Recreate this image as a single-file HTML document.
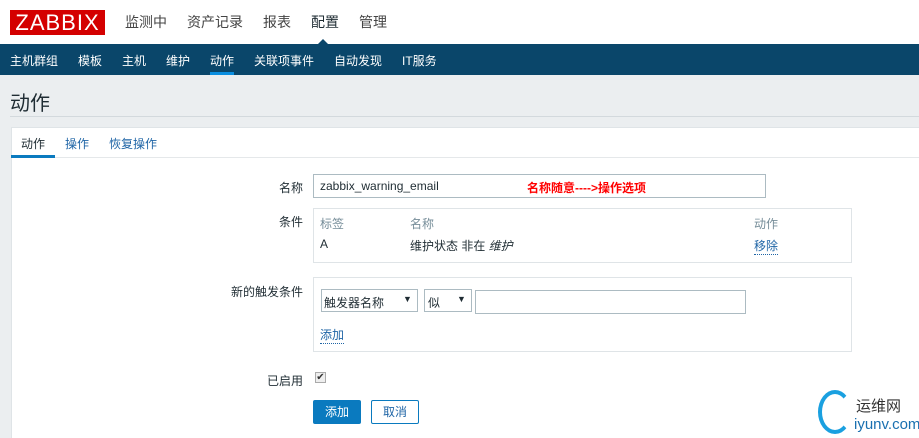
<!DOCTYPE html>
<html><head><meta charset="utf-8"><style>
*{margin:0;padding:0;box-sizing:border-box}
body{width:919px;height:438px;overflow:hidden;background:#ebeef0;font-family:"Liberation Sans","Noto Sans CJK SC",sans-serif;font-size:12px;color:#1f2c33;position:relative}
.a{position:absolute}
.hdr{left:0;top:0;width:919px;height:44px;background:#fff}
.logo{left:10px;top:10px;width:95px;height:25px;background:#d40000;color:#fff;font-size:22px;line-height:25px;text-align:center;letter-spacing:1px}
.top{top:12px;font-size:14px;color:#444}
.nav{left:0;top:44px;width:919px;height:31px;background:#0a466a}
.nav span{position:absolute;top:8px;color:#fff;font-size:12px}
.tab{top:135px;color:#1f65a6}
.lbl{right:616px;text-align:right;color:#1f2c33}
.box{border:1px solid #dfe4e7;background:#fff}
.inp{border:1px solid #acbbc2;background:#fff}
.lnk{color:#1f65a6;border-bottom:1px dotted #1f65a6}
</style></head><body>
<div class="a hdr"></div>
<div class="a logo">ZABBIX</div>
<div class="a top" style="left:125px">监测中</div>
<div class="a top" style="left:187px">资产记录</div>
<div class="a top" style="left:263px">报表</div>
<div class="a top" style="left:311px;color:#1f2c33">配置</div>
<div class="a top" style="left:359px">管理</div>
<div class="a nav">
<span style="left:10px">主机群组</span><span style="left:78px">模板</span><span style="left:122px">主机</span><span style="left:166px">维护</span><span style="left:210px">动作</span><span style="left:254px">关联项事件</span><span style="left:334px">自动发现</span><span style="left:402px">IT服务</span>
</div>
<div class="a" style="left:210px;top:72px;width:24px;height:3px;background:#0a8ee0"></div>
<div class="a" style="left:318px;top:39px;width:0;height:0;border-left:5px solid transparent;border-right:5px solid transparent;border-bottom:5px solid #0a466a"></div>
<div class="a" style="left:10px;top:87px;font-size:20px;color:#1f2c33">动作</div>
<div class="a" style="left:10px;top:116px;width:909px;height:1px;background:#d3d9dd"></div>
<div class="a" style="left:11px;top:127px;width:908px;height:311px;background:#fff;border:1px solid #dfe4e7;border-right:none;border-bottom:none"></div>
<div class="a" style="left:11px;top:157px;width:908px;height:1px;background:#e5e8ea"></div>
<div class="a tab" style="left:21px;color:#1f2c33">动作</div>
<div class="a tab" style="left:65px">操作</div>
<div class="a tab" style="left:109px">恢复操作</div>
<div class="a" style="left:11px;top:155px;width:44px;height:3px;background:#0a7abf"></div>
<div class="a lbl" style="top:179px">名称</div>
<div class="a inp" style="left:313px;top:174px;width:453px;height:24px"></div>
<div class="a" style="left:320px;top:179px;color:#1f2c33">zabbix_warning_email</div>
<div class="a" style="left:527px;top:179px;color:#f00;font-weight:bold">名称随意---->操作选项</div>
<div class="a lbl" style="top:213px">条件</div>
<div class="a box" style="left:313px;top:208px;width:539px;height:55px"></div>
<div class="a" style="left:320px;top:215px;color:#768d99">标签</div>
<div class="a" style="left:410px;top:215px;color:#768d99">名称</div>
<div class="a" style="left:754px;top:215px;color:#768d99">动作</div>
<div class="a" style="left:320px;top:237px">A</div>
<div class="a" style="left:410px;top:237px">维护状态 非在 <i>维护</i></div>
<div class="a lnk" style="left:754px;top:237px">移除</div>
<div class="a lbl" style="top:283px">新的触发条件</div>
<div class="a box" style="left:313px;top:277px;width:539px;height:75px"></div>
<div class="a inp" style="left:321px;top:289px;width:97px;height:23px"></div>
<div class="a" style="left:324px;top:294px">触发器名称</div>
<div class="a" style="left:403px;top:294px;font-size:9px">▼</div>
<div class="a inp" style="left:424px;top:289px;width:48px;height:23px"></div>
<div class="a" style="left:428px;top:294px">似</div>
<div class="a" style="left:457px;top:294px;font-size:9px">▼</div>
<div class="a inp" style="left:475px;top:290px;width:271px;height:24px"></div>
<div class="a lnk" style="left:320px;top:326px">添加</div>
<div class="a lbl" style="top:372px">已启用</div>
<div class="a" style="left:315px;top:372px;width:11px;height:11px;border:1px solid #aaa;background:#eee;font-size:10px;line-height:9px;text-align:center;color:#333">✔</div>
<div class="a" style="left:313px;top:400px;width:48px;height:24px;background:#0a7abf;border-radius:2px;color:#fff;text-align:center;line-height:24px">添加</div>
<div class="a" style="left:371px;top:400px;width:48px;height:24px;background:#fff;border:1px solid #0a7abf;border-radius:2px;color:#1f65a6;text-align:center;line-height:22px">取消</div>
<div class="a" style="left:818px;top:390px;width:34px;height:44px;border:4px solid #1aa0e0;border-right-color:transparent;border-radius:50%"></div>
<div class="a" style="left:856px;top:395px;font-size:15px;color:#333">运维网</div>
<div class="a" style="left:854px;top:416px;font-size:15px;color:#1a70b0">iyunv.com</div>
</body></html>
